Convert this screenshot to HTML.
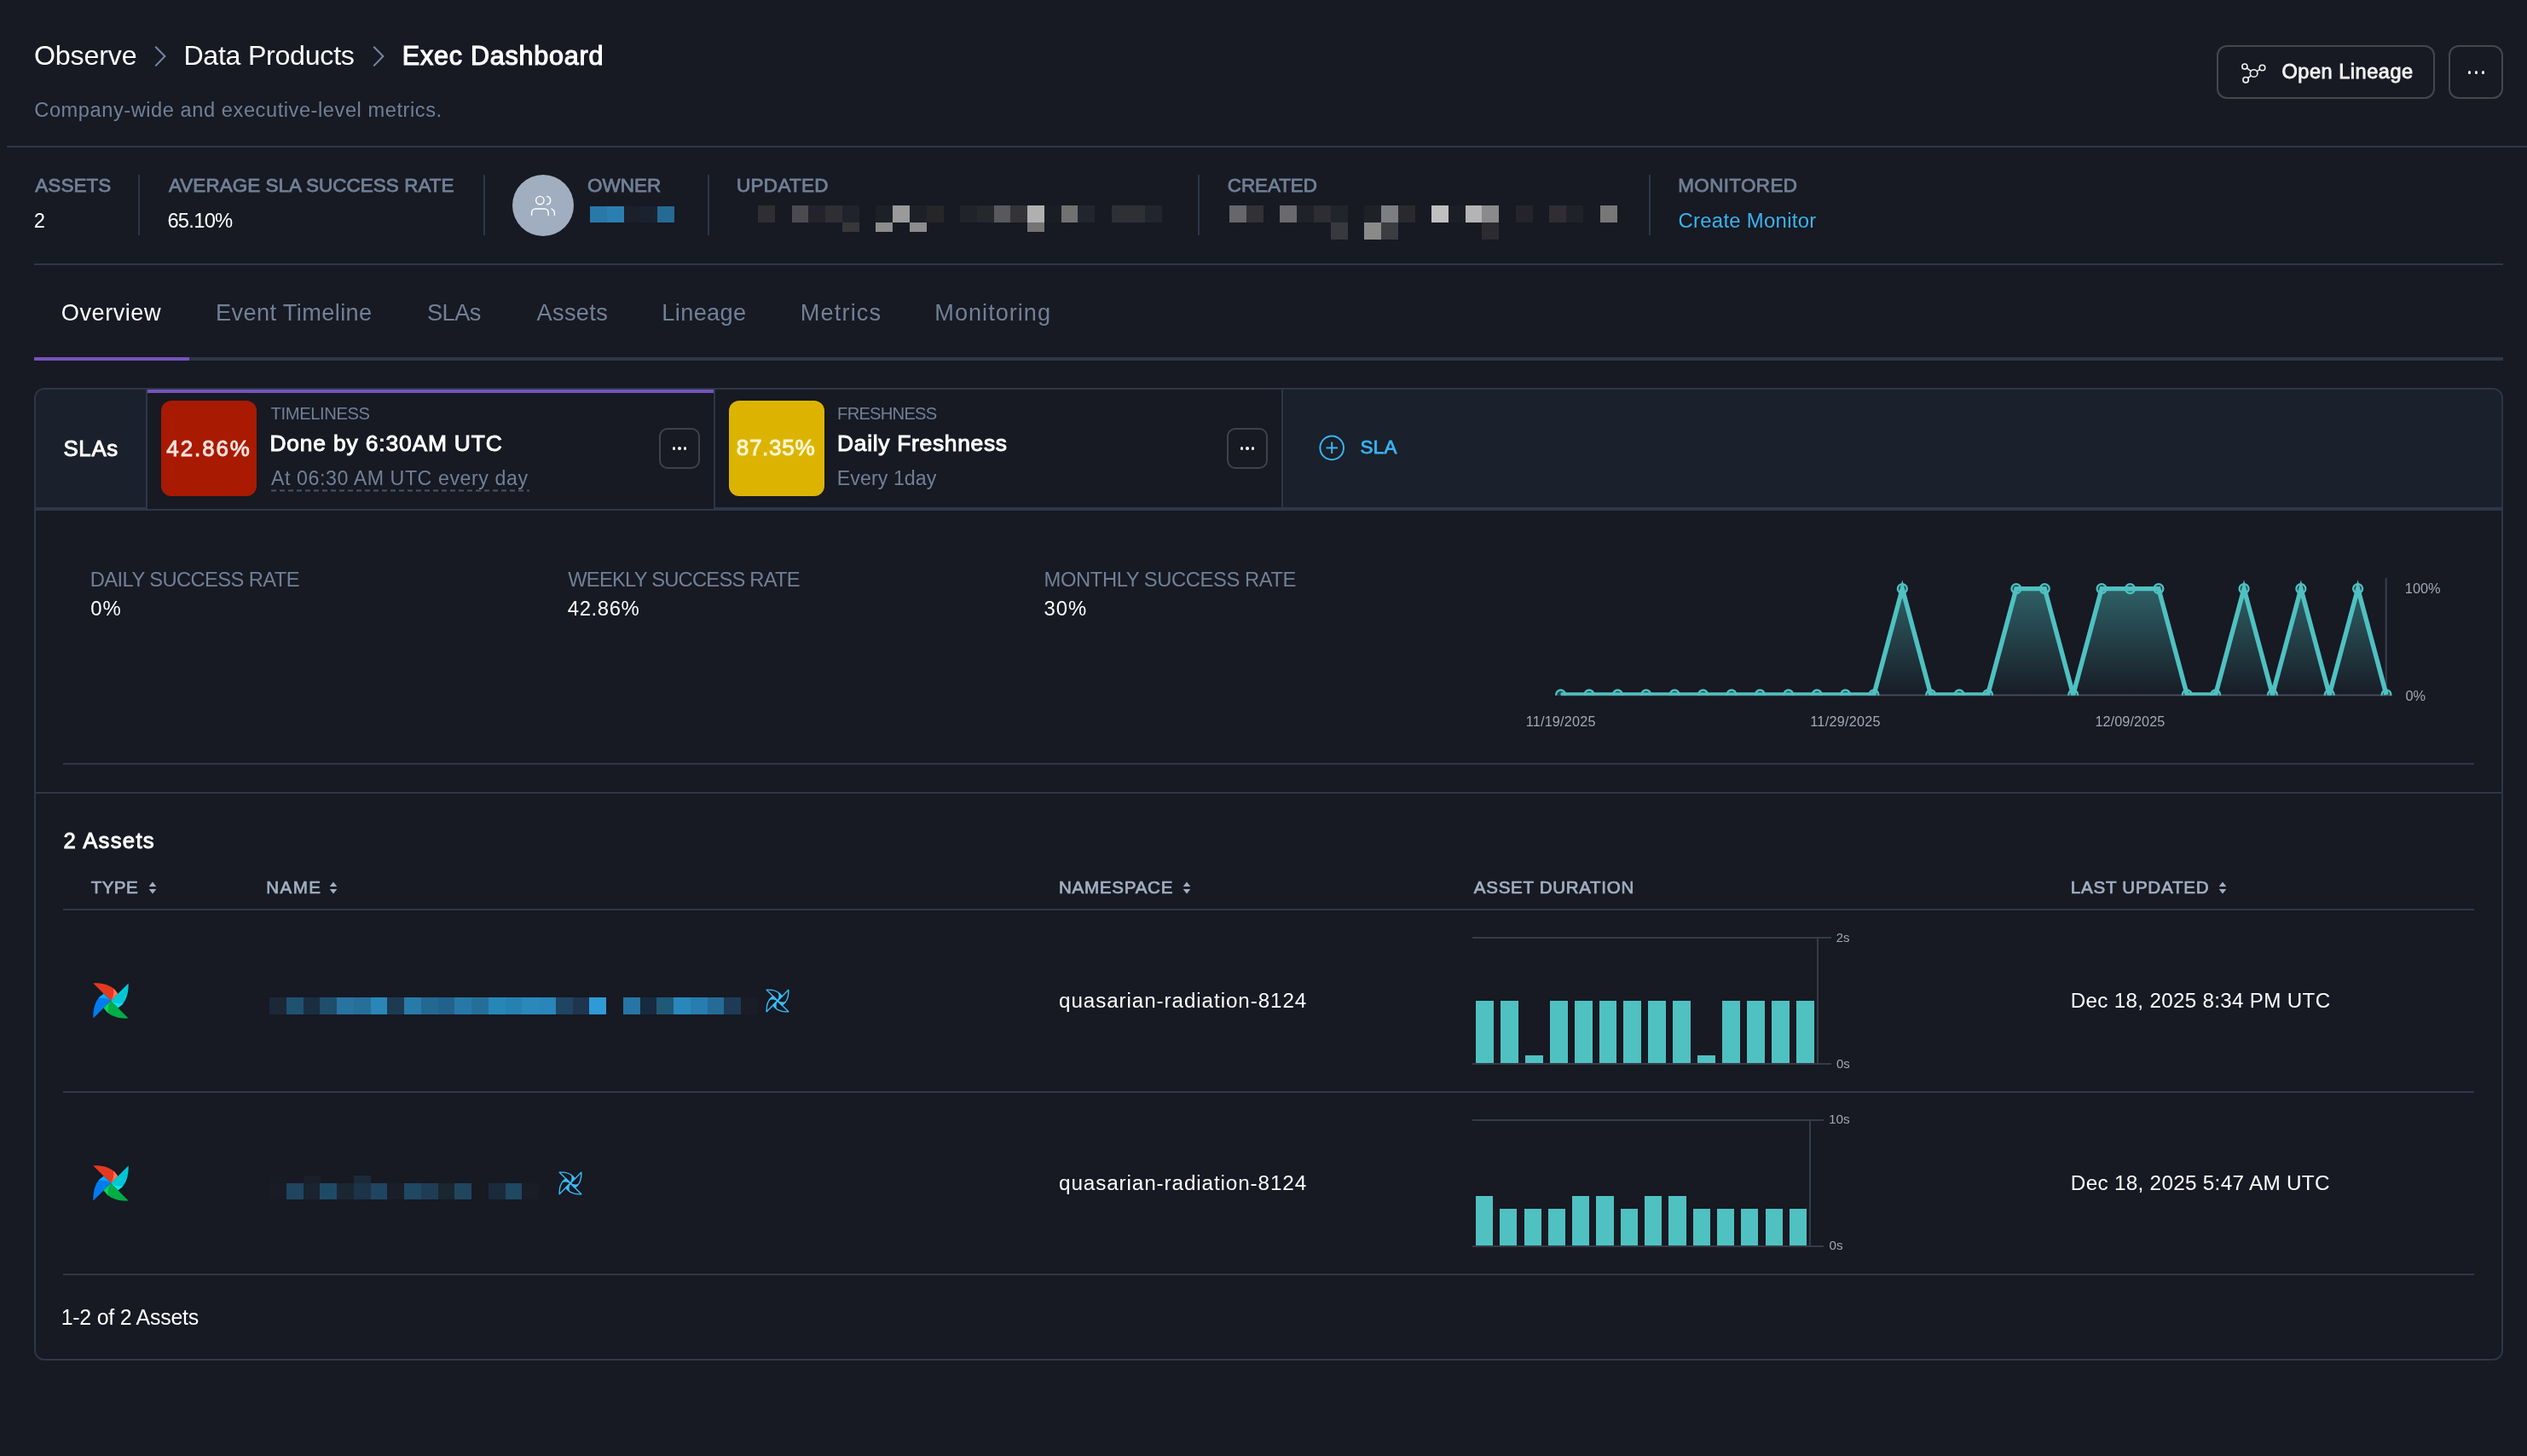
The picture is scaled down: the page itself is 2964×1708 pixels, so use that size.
<!DOCTYPE html><html><head><meta charset="utf-8"><style>
html,body{margin:0;padding:0;background:#171923;width:2964px;height:1708px;overflow:hidden}
body{position:relative;font-family:"Liberation Sans",sans-serif}
.t{position:absolute;line-height:1;white-space:nowrap}
.r{position:absolute;box-sizing:border-box}
</style></head><body>
<div class="r" style="left:8px;top:171px;width:2956px;height:2px;background:#2d3748;"></div>
<svg class="r" style="left:170px;top:45px" width="300" height="45"><polyline points="12.8,10.2 23.4,21 12.8,31.9" fill="none" stroke="#7888a2" stroke-width="2" stroke-linecap="round"/><polyline points="268.8,10.2 279.4,21 268.8,31.9" fill="none" stroke="#7888a2" stroke-width="2" stroke-linecap="round"/></svg>
<div class="r" style="left:2600px;top:53px;width:256px;height:63px;background:transparent;border:2px solid #45474f;border-radius:12px"></div>
<div class="r" style="left:2872px;top:53px;width:64px;height:63px;background:transparent;border:2px solid #45474f;border-radius:12px"></div>
<svg class="r" style="left:2626px;top:70px" width="36" height="32"><g fill="none" stroke="#f2f2f2" stroke-width="1.6"><circle cx="6.9" cy="8.1" r="3.05"/><circle cx="27.5" cy="9.5" r="3.3"/><circle cx="17.6" cy="16" r="4.3"/><circle cx="8.1" cy="23.7" r="3.2"/><line x1="9.36" y1="9.91" x2="14.14" y2="13.45"/><line x1="24.74" y1="11.31" x2="21.2" y2="13.64"/><line x1="10.59" y1="21.68" x2="14.26" y2="18.71"/></g></svg>
<div class="r" style="left:2894.7px;top:83.2px;width:3.6px;height:3.6px;background:#f2f2f2;border-radius:50%"></div>
<div class="r" style="left:2902.7px;top:83.2px;width:3.6px;height:3.6px;background:#f2f2f2;border-radius:50%"></div>
<div class="r" style="left:2910.7px;top:83.2px;width:3.6px;height:3.6px;background:#f2f2f2;border-radius:50%"></div>
<div class="r" style="left:162px;top:205px;width:2px;height:71px;background:#2d3748;"></div>
<div class="r" style="left:567px;top:205px;width:2px;height:71px;background:#2d3748;"></div>
<div class="r" style="left:830px;top:205px;width:2px;height:71px;background:#2d3748;"></div>
<div class="r" style="left:1405px;top:205px;width:2px;height:71px;background:#2d3748;"></div>
<div class="r" style="left:1934px;top:205px;width:2px;height:71px;background:#2d3748;"></div>
<div class="r" style="left:601px;top:205px;width:72px;height:72px;background:#a0aec0;border-radius:50%"></div>
<svg class="r" style="left:617px;top:222px" width="40" height="40"><g fill="none" stroke="#fff" stroke-width="1.45" stroke-linecap="round"><circle cx="16.35" cy="13.05" r="4.7"/><path d="M6.6 30.2 V27.6 C6.6 25 8.6 22.9 11.2 22.9 H21.7 C24.3 22.9 26.2 25 26.2 27.6 V30.2"/><path d="M24.5 8.4 A4.8 4.8 0 0 1 24.5 17.9"/><path d="M30 23.1 C32.1 24 33.4 25.8 33.4 28 V30.2"/></g></svg>
<div class="r" style="left:692.0px;top:242px;width:20.05px;height:19px;background:#2878a8;"></div><div class="r" style="left:711.75px;top:242px;width:20.05px;height:19px;background:#2a7fb0;"></div><div class="r" style="left:731.5px;top:242px;width:20.05px;height:19px;background:#1b202b;"></div><div class="r" style="left:751.25px;top:242px;width:20.05px;height:19px;background:#1a2230;"></div><div class="r" style="left:771.0px;top:242px;width:20.05px;height:19px;background:#246a92;"></div>
<div class="r" style="left:889.0px;top:241px;width:20.05px;height:20px;background:#2f2f33;"></div><div class="r" style="left:928.5px;top:241px;width:20.05px;height:20px;background:#4a4a50;"></div><div class="r" style="left:948.25px;top:241px;width:20.05px;height:20px;background:#24232b;"></div><div class="r" style="left:968.0px;top:241px;width:20.05px;height:20px;background:#302e35;"></div><div class="r" style="left:987.75px;top:241px;width:20.05px;height:20px;background:#20232b;"></div><div class="r" style="left:1027.25px;top:241px;width:20.05px;height:20px;background:#1e2028;"></div><div class="r" style="left:1047.0px;top:241px;width:20.05px;height:20px;background:#9a9a9a;"></div><div class="r" style="left:1066.75px;top:241px;width:20.05px;height:20px;background:#1e2028;"></div><div class="r" style="left:1086.5px;top:241px;width:20.05px;height:20px;background:#262629;"></div><div class="r" style="left:1126.0px;top:241px;width:20.05px;height:20px;background:#202329;"></div><div class="r" style="left:1145.75px;top:241px;width:20.05px;height:20px;background:#25282d;"></div><div class="r" style="left:1165.5px;top:241px;width:20.05px;height:20px;background:#59585d;"></div><div class="r" style="left:1185.25px;top:241px;width:20.05px;height:20px;background:#333338;"></div><div class="r" style="left:1205.0px;top:241px;width:20.05px;height:20px;background:#b0b0b0;"></div><div class="r" style="left:1224.75px;top:241px;width:20.05px;height:20px;background:#1b1d24;"></div><div class="r" style="left:1244.5px;top:241px;width:20.05px;height:20px;background:#717171;"></div><div class="r" style="left:1264.25px;top:241px;width:20.05px;height:20px;background:#22252e;"></div><div class="r" style="left:1303.75px;top:241px;width:20.05px;height:20px;background:#2f3036;"></div><div class="r" style="left:1323.5px;top:241px;width:20.05px;height:20px;background:#2f3036;"></div><div class="r" style="left:1343.25px;top:241px;width:20.05px;height:20px;background:#22252e;"></div>
<div class="r" style="left:987.75px;top:261px;width:20.05px;height:11px;background:#38383b;"></div><div class="r" style="left:1027.25px;top:261px;width:20.05px;height:11px;background:#8c8c8c;"></div><div class="r" style="left:1066.75px;top:261px;width:20.05px;height:11px;background:#8c8c8c;"></div><div class="r" style="left:1205.0px;top:261px;width:20.05px;height:11px;background:#747474;"></div>
<div class="r" style="left:1442.0px;top:241px;width:20.05px;height:20px;background:#67666b;"></div><div class="r" style="left:1461.75px;top:241px;width:20.05px;height:20px;background:#313136;"></div><div class="r" style="left:1501.25px;top:241px;width:20.05px;height:20px;background:#6a696e;"></div><div class="r" style="left:1521.0px;top:241px;width:20.05px;height:20px;background:#202229;"></div><div class="r" style="left:1540.75px;top:241px;width:20.05px;height:20px;background:#2d2d32;"></div><div class="r" style="left:1560.5px;top:241px;width:20.05px;height:20px;background:#22242c;"></div><div class="r" style="left:1600.0px;top:241px;width:20.05px;height:20px;background:#1f2129;"></div><div class="r" style="left:1619.75px;top:241px;width:20.05px;height:20px;background:#7d7e81;"></div><div class="r" style="left:1639.5px;top:241px;width:20.05px;height:20px;background:#2a2a2e;"></div><div class="r" style="left:1679.0px;top:241px;width:20.05px;height:20px;background:#c0c0c0;"></div><div class="r" style="left:1698.75px;top:241px;width:20.05px;height:20px;background:#1c1e25;"></div><div class="r" style="left:1718.5px;top:241px;width:20.05px;height:20px;background:#b4b4b4;"></div><div class="r" style="left:1738.25px;top:241px;width:20.05px;height:20px;background:#8a8a8a;"></div><div class="r" style="left:1777.75px;top:241px;width:20.05px;height:20px;background:#25242c;"></div><div class="r" style="left:1817.25px;top:241px;width:20.05px;height:20px;background:#302e33;"></div><div class="r" style="left:1837.0px;top:241px;width:20.05px;height:20px;background:#20222a;"></div><div class="r" style="left:1876.5px;top:241px;width:20.05px;height:20px;background:#777777;"></div>
<div class="r" style="left:1560.5px;top:261px;width:20.05px;height:20px;background:#38393e;"></div><div class="r" style="left:1600.0px;top:261px;width:20.05px;height:20px;background:#8a8a8a;"></div><div class="r" style="left:1619.75px;top:261px;width:20.05px;height:20px;background:#3c3d41;"></div><div class="r" style="left:1738.25px;top:261px;width:20.05px;height:20px;background:#2c2b30;"></div>
<div class="r" style="left:40px;top:309px;width:2896px;height:2px;background:#2d3748;"></div>
<div class="r" style="left:40px;top:419px;width:2896px;height:4px;background:#2d3748;"></div>
<div class="r" style="left:40px;top:419px;width:182px;height:4px;background:#7654ba;"></div>
<div class="r" style="left:40px;top:455px;width:2896px;height:1141px;background:transparent;border:2px solid #2d3748;border-radius:12px"></div>
<div class="r" style="left:42px;top:457px;width:130px;height:138px;background:#1a202c;border-top-left-radius:10px"></div>
<div class="r" style="left:171px;top:457px;width:2px;height:138px;background:#2d3748;"></div>
<div class="r" style="left:173px;top:457px;width:664px;height:4px;background:#7654ba;"></div>
<div class="r" style="left:837px;top:457px;width:2px;height:138px;background:#2d3748;"></div>
<div class="r" style="left:1503px;top:457px;width:2px;height:138px;background:#2d3748;"></div>
<div class="r" style="left:1505px;top:457px;width:1429px;height:138px;background:#1a202c;border-top-right-radius:10px"></div>
<div class="r" style="left:42px;top:595px;width:2892px;height:4px;background:#2d3748;"></div>
<div class="r" style="left:173px;top:595px;width:664px;height:2px;background:#171923;"></div>
<div class="r" style="left:189px;top:470px;width:112px;height:112px;background:#a81a02;border-radius:12px"></div>
<div class="r" style="left:855px;top:470px;width:112px;height:112px;background:#dcb400;border-radius:12px"></div>
<svg class="r" style="left:318px;top:574px" width="304" height="3"><line x1="0" y1="1.5" x2="303" y2="1.5" stroke="#4a5568" stroke-width="2" stroke-dasharray="6 4"/></svg>
<div class="r" style="left:773px;top:502px;width:48px;height:48px;background:transparent;border:2px solid #3f4249;border-radius:10px"></div>
<div class="r" style="left:788.75px;top:524.2px;width:3.5px;height:3.5px;background:#f2f2f2;border-radius:50%"></div>
<div class="r" style="left:795.25px;top:524.2px;width:3.5px;height:3.5px;background:#f2f2f2;border-radius:50%"></div>
<div class="r" style="left:801.75px;top:524.2px;width:3.5px;height:3.5px;background:#f2f2f2;border-radius:50%"></div>
<div class="r" style="left:1439px;top:502px;width:48px;height:48px;background:transparent;border:2px solid #3f4249;border-radius:10px"></div>
<div class="r" style="left:1454.75px;top:524.2px;width:3.5px;height:3.5px;background:#f2f2f2;border-radius:50%"></div>
<div class="r" style="left:1461.25px;top:524.2px;width:3.5px;height:3.5px;background:#f2f2f2;border-radius:50%"></div>
<div class="r" style="left:1467.75px;top:524.2px;width:3.5px;height:3.5px;background:#f2f2f2;border-radius:50%"></div>
<svg class="r" style="left:1546px;top:509px" width="33" height="33"><g fill="none" stroke="#3ab4ef" stroke-width="2"><circle cx="16.2" cy="16.4" r="13.8"/><line x1="9.5" y1="16.4" x2="23" y2="16.4"/><line x1="16.2" y1="9.5" x2="16.2" y2="23"/></g></svg>
<svg class="r" style="left:1800px;top:660px" width="1110" height="180">
<defs><linearGradient id="lg" x1="0" y1="0" x2="0" y2="1"><stop offset="0" stop-color="#4fc1c1" stop-opacity="0.42"/><stop offset="1" stop-color="#4fc1c1" stop-opacity="0.02"/></linearGradient>
<clipPath id="cp"><rect x="0" y="0" width="1110" height="155.8"/></clipPath></defs>
<line x1="30.59999999999991" y1="155.5" x2="1005" y2="155.5" stroke="#434a5a" stroke-width="2"/><line x1="998.6999999999998" y1="18" x2="998.6999999999998" y2="155.0" stroke="#3a4150" stroke-width="2"/>
<g clip-path="url(#cp)"><path d="M30.60 155.00 L63.99 155.00 L97.39 155.00 L130.78 155.00 L164.18 155.00 L197.57 155.00 L230.96 155.00 L264.36 155.00 L297.75 155.00 L331.15 155.00 L364.54 155.00 L397.93 155.00 L431.33 30.60 L464.72 155.00 L498.12 155.00 L531.51 155.00 L564.90 30.60 L598.30 30.60 L631.69 155.00 L665.09 30.60 L698.48 30.60 L731.87 30.60 L765.27 155.00 L798.66 155.00 L832.06 30.60 L865.45 155.00 L898.84 30.60 L932.24 155.00 L965.63 30.60 L999.03 155.00 L999.03 155.0 L30.60 155.0 Z" fill="url(#lg)" transform="translate(0,0)"/>
<circle cx="30.60" cy="155.00" r="5.5" fill="#4fc1c1" fill-opacity="0.25" stroke="#4fc1c1" stroke-width="2.3"/><circle cx="63.99" cy="155.00" r="5.5" fill="#4fc1c1" fill-opacity="0.25" stroke="#4fc1c1" stroke-width="2.3"/><circle cx="97.39" cy="155.00" r="5.5" fill="#4fc1c1" fill-opacity="0.25" stroke="#4fc1c1" stroke-width="2.3"/><circle cx="130.78" cy="155.00" r="5.5" fill="#4fc1c1" fill-opacity="0.25" stroke="#4fc1c1" stroke-width="2.3"/><circle cx="164.18" cy="155.00" r="5.5" fill="#4fc1c1" fill-opacity="0.25" stroke="#4fc1c1" stroke-width="2.3"/><circle cx="197.57" cy="155.00" r="5.5" fill="#4fc1c1" fill-opacity="0.25" stroke="#4fc1c1" stroke-width="2.3"/><circle cx="230.96" cy="155.00" r="5.5" fill="#4fc1c1" fill-opacity="0.25" stroke="#4fc1c1" stroke-width="2.3"/><circle cx="264.36" cy="155.00" r="5.5" fill="#4fc1c1" fill-opacity="0.25" stroke="#4fc1c1" stroke-width="2.3"/><circle cx="297.75" cy="155.00" r="5.5" fill="#4fc1c1" fill-opacity="0.25" stroke="#4fc1c1" stroke-width="2.3"/><circle cx="331.15" cy="155.00" r="5.5" fill="#4fc1c1" fill-opacity="0.25" stroke="#4fc1c1" stroke-width="2.3"/><circle cx="364.54" cy="155.00" r="5.5" fill="#4fc1c1" fill-opacity="0.25" stroke="#4fc1c1" stroke-width="2.3"/><circle cx="397.93" cy="155.00" r="5.5" fill="#4fc1c1" fill-opacity="0.25" stroke="#4fc1c1" stroke-width="2.3"/><circle cx="431.33" cy="30.60" r="5.5" fill="#4fc1c1" fill-opacity="0.25" stroke="#4fc1c1" stroke-width="2.3"/><circle cx="464.72" cy="155.00" r="5.5" fill="#4fc1c1" fill-opacity="0.25" stroke="#4fc1c1" stroke-width="2.3"/><circle cx="498.12" cy="155.00" r="5.5" fill="#4fc1c1" fill-opacity="0.25" stroke="#4fc1c1" stroke-width="2.3"/><circle cx="531.51" cy="155.00" r="5.5" fill="#4fc1c1" fill-opacity="0.25" stroke="#4fc1c1" stroke-width="2.3"/><circle cx="564.90" cy="30.60" r="5.5" fill="#4fc1c1" fill-opacity="0.25" stroke="#4fc1c1" stroke-width="2.3"/><circle cx="598.30" cy="30.60" r="5.5" fill="#4fc1c1" fill-opacity="0.25" stroke="#4fc1c1" stroke-width="2.3"/><circle cx="631.69" cy="155.00" r="5.5" fill="#4fc1c1" fill-opacity="0.25" stroke="#4fc1c1" stroke-width="2.3"/><circle cx="665.09" cy="30.60" r="5.5" fill="#4fc1c1" fill-opacity="0.25" stroke="#4fc1c1" stroke-width="2.3"/><circle cx="698.48" cy="30.60" r="5.5" fill="#4fc1c1" fill-opacity="0.25" stroke="#4fc1c1" stroke-width="2.3"/><circle cx="731.87" cy="30.60" r="5.5" fill="#4fc1c1" fill-opacity="0.25" stroke="#4fc1c1" stroke-width="2.3"/><circle cx="765.27" cy="155.00" r="5.5" fill="#4fc1c1" fill-opacity="0.25" stroke="#4fc1c1" stroke-width="2.3"/><circle cx="798.66" cy="155.00" r="5.5" fill="#4fc1c1" fill-opacity="0.25" stroke="#4fc1c1" stroke-width="2.3"/><circle cx="832.06" cy="30.60" r="5.5" fill="#4fc1c1" fill-opacity="0.25" stroke="#4fc1c1" stroke-width="2.3"/><circle cx="865.45" cy="155.00" r="5.5" fill="#4fc1c1" fill-opacity="0.25" stroke="#4fc1c1" stroke-width="2.3"/><circle cx="898.84" cy="30.60" r="5.5" fill="#4fc1c1" fill-opacity="0.25" stroke="#4fc1c1" stroke-width="2.3"/><circle cx="932.24" cy="155.00" r="5.5" fill="#4fc1c1" fill-opacity="0.25" stroke="#4fc1c1" stroke-width="2.3"/><circle cx="965.63" cy="30.60" r="5.5" fill="#4fc1c1" fill-opacity="0.25" stroke="#4fc1c1" stroke-width="2.3"/><circle cx="999.03" cy="155.00" r="5.5" fill="#4fc1c1" fill-opacity="0.25" stroke="#4fc1c1" stroke-width="2.3"/>
<path d="M30.60 155.00 L63.99 155.00 L97.39 155.00 L130.78 155.00 L164.18 155.00 L197.57 155.00 L230.96 155.00 L264.36 155.00 L297.75 155.00 L331.15 155.00 L364.54 155.00 L397.93 155.00 L431.33 30.60 L464.72 155.00 L498.12 155.00 L531.51 155.00 L564.90 30.60 L598.30 30.60 L631.69 155.00 L665.09 30.60 L698.48 30.60 L731.87 30.60 L765.27 155.00 L798.66 155.00 L832.06 30.60 L865.45 155.00 L898.84 30.60 L932.24 155.00 L965.63 30.60 L999.03 155.00" fill="none" stroke="#4fc1c1" stroke-width="5.4" stroke-linejoin="miter" stroke-miterlimit="4"/></g></svg>
<div class="r" style="left:74px;top:895px;width:2828px;height:2px;background:#2d3748;"></div>
<div class="r" style="left:42px;top:929px;width:2892px;height:2px;background:#2d3748;"></div>
<svg class="r" style="left:173.5px;top:1034px" width="10" height="15"><path d="M5 0.5 L9.3 6 L0.7 6 Z M0.7 9 L9.3 9 L5 14.5 Z" fill="#a0aec0"/></svg>
<svg class="r" style="left:386.3px;top:1034px" width="10" height="15"><path d="M5 0.5 L9.3 6 L0.7 6 Z M0.7 9 L9.3 9 L5 14.5 Z" fill="#a0aec0"/></svg>
<svg class="r" style="left:1387px;top:1034px" width="10" height="15"><path d="M5 0.5 L9.3 6 L0.7 6 Z M0.7 9 L9.3 9 L5 14.5 Z" fill="#a0aec0"/></svg>
<svg class="r" style="left:2602.4px;top:1034px" width="10" height="15"><path d="M5 0.5 L9.3 6 L0.7 6 Z M0.7 9 L9.3 9 L5 14.5 Z" fill="#a0aec0"/></svg>
<div class="r" style="left:74px;top:1066px;width:2828px;height:2px;background:#2d3748;"></div>
<div class="r" style="left:74px;top:1280px;width:2828px;height:2px;background:#2d3748;"></div>
<div class="r" style="left:74px;top:1494px;width:2828px;height:2px;background:#2d3748;"></div>
<svg class="r" style="left:109px;top:1153px" width="42" height="42" viewBox="4.6 4.6 42.8 42.8"><g transform="rotate(0 26 26)"><path d="M5 5 C15 4.5 25 7 30.5 12.5 L34.5 17.5 L26 26 Z" fill="#e43921"/><path d="M29 11.2 C30 15 29.5 21 26 26 L34.5 17.5 L30.5 12.5 Z" fill="#ff7557"/></g><g transform="rotate(90 26 26)"><path d="M5 5 C15 4.5 25 7 30.5 12.5 L34.5 17.5 L26 26 Z" fill="#00c7d4"/><path d="M29 11.2 C30 15 29.5 21 26 26 L34.5 17.5 L30.5 12.5 Z" fill="#11e1ee"/></g><g transform="rotate(180 26 26)"><path d="M5 5 C15 4.5 25 7 30.5 12.5 L34.5 17.5 L26 26 Z" fill="#00ad46"/><path d="M29 11.2 C30 15 29.5 21 26 26 L34.5 17.5 L30.5 12.5 Z" fill="#04d659"/></g><g transform="rotate(270 26 26)"><path d="M5 5 C15 4.5 25 7 30.5 12.5 L34.5 17.5 L26 26 Z" fill="#017cee"/><path d="M29 11.2 C30 15 29.5 21 26 26 L34.5 17.5 L30.5 12.5 Z" fill="#00adff"/></g></svg>
<svg class="r" style="left:109px;top:1367px" width="42" height="42" viewBox="4.6 4.6 42.8 42.8"><g transform="rotate(0 26 26)"><path d="M5 5 C15 4.5 25 7 30.5 12.5 L34.5 17.5 L26 26 Z" fill="#e43921"/><path d="M29 11.2 C30 15 29.5 21 26 26 L34.5 17.5 L30.5 12.5 Z" fill="#ff7557"/></g><g transform="rotate(90 26 26)"><path d="M5 5 C15 4.5 25 7 30.5 12.5 L34.5 17.5 L26 26 Z" fill="#00c7d4"/><path d="M29 11.2 C30 15 29.5 21 26 26 L34.5 17.5 L30.5 12.5 Z" fill="#11e1ee"/></g><g transform="rotate(180 26 26)"><path d="M5 5 C15 4.5 25 7 30.5 12.5 L34.5 17.5 L26 26 Z" fill="#00ad46"/><path d="M29 11.2 C30 15 29.5 21 26 26 L34.5 17.5 L30.5 12.5 Z" fill="#04d659"/></g><g transform="rotate(270 26 26)"><path d="M5 5 C15 4.5 25 7 30.5 12.5 L34.5 17.5 L26 26 Z" fill="#017cee"/><path d="M29 11.2 C30 15 29.5 21 26 26 L34.5 17.5 L30.5 12.5 Z" fill="#00adff"/></g></svg>
<div class="r" style="left:316.0px;top:1170px;width:20.05px;height:20px;background:#1b2838;"></div><div class="r" style="left:335.75px;top:1170px;width:20.05px;height:20px;background:#1f5170;"></div><div class="r" style="left:355.5px;top:1170px;width:20.05px;height:20px;background:#1a2e40;"></div><div class="r" style="left:375.25px;top:1170px;width:20.05px;height:20px;background:#1f4d6c;"></div><div class="r" style="left:395.0px;top:1170px;width:20.05px;height:20px;background:#2873a0;"></div><div class="r" style="left:414.75px;top:1170px;width:20.05px;height:20px;background:#256f99;"></div><div class="r" style="left:434.5px;top:1170px;width:20.05px;height:20px;background:#2987b8;"></div><div class="r" style="left:454.25px;top:1170px;width:20.05px;height:20px;background:#1e3a52;"></div><div class="r" style="left:474.0px;top:1170px;width:20.05px;height:20px;background:#287ba8;"></div><div class="r" style="left:493.75px;top:1170px;width:20.05px;height:20px;background:#236890;"></div><div class="r" style="left:513.5px;top:1170px;width:20.05px;height:20px;background:#22618a;"></div><div class="r" style="left:533.25px;top:1170px;width:20.05px;height:20px;background:#2778a8;"></div><div class="r" style="left:553.0px;top:1170px;width:20.05px;height:20px;background:#256e98;"></div><div class="r" style="left:572.75px;top:1170px;width:20.05px;height:20px;background:#2786b8;"></div><div class="r" style="left:592.5px;top:1170px;width:20.05px;height:20px;background:#2680b2;"></div><div class="r" style="left:612.25px;top:1170px;width:20.05px;height:20px;background:#2a88bb;"></div><div class="r" style="left:632.0px;top:1170px;width:20.05px;height:20px;background:#2886bb;"></div><div class="r" style="left:651.75px;top:1170px;width:20.05px;height:20px;background:#1e4562;"></div><div class="r" style="left:671.5px;top:1170px;width:20.05px;height:20px;background:#1d364e;"></div><div class="r" style="left:691.25px;top:1170px;width:20.05px;height:20px;background:#2e9bd6;"></div><div class="r" style="left:730.75px;top:1170px;width:20.05px;height:20px;background:#2775a5;"></div><div class="r" style="left:750.5px;top:1170px;width:20.05px;height:20px;background:#182a40;"></div><div class="r" style="left:770.25px;top:1170px;width:20.05px;height:20px;background:#205878;"></div><div class="r" style="left:790.0px;top:1170px;width:20.05px;height:20px;background:#2888bb;"></div><div class="r" style="left:809.75px;top:1170px;width:20.05px;height:20px;background:#277daf;"></div><div class="r" style="left:829.5px;top:1170px;width:20.05px;height:20px;background:#246c96;"></div><div class="r" style="left:849.25px;top:1170px;width:20.05px;height:20px;background:#1e3b55;"></div><div class="r" style="left:869.0px;top:1170px;width:20.05px;height:20px;background:#1a1d27;"></div>
<div class="r" style="left:316.0px;top:1388px;width:20.05px;height:19px;background:#181c26;"></div><div class="r" style="left:335.75px;top:1388px;width:20.05px;height:19px;background:#1f4560;"></div><div class="r" style="left:355.5px;top:1388px;width:20.05px;height:19px;background:#1a2330;"></div><div class="r" style="left:375.25px;top:1388px;width:20.05px;height:19px;background:#1f4a66;"></div><div class="r" style="left:395.0px;top:1388px;width:20.05px;height:19px;background:#1b2633;"></div><div class="r" style="left:414.75px;top:1388px;width:20.05px;height:19px;background:#1d3348;"></div><div class="r" style="left:434.5px;top:1388px;width:20.05px;height:19px;background:#1f4560;"></div><div class="r" style="left:454.25px;top:1388px;width:20.05px;height:19px;background:#1a1e28;"></div><div class="r" style="left:474.0px;top:1388px;width:20.05px;height:19px;background:#1f4862;"></div><div class="r" style="left:493.75px;top:1388px;width:20.05px;height:19px;background:#1f3c55;"></div><div class="r" style="left:513.5px;top:1388px;width:20.05px;height:19px;background:#1a2630;"></div><div class="r" style="left:533.25px;top:1388px;width:20.05px;height:19px;background:#20465f;"></div><div class="r" style="left:572.75px;top:1388px;width:20.05px;height:19px;background:#1b2a3a;"></div><div class="r" style="left:592.5px;top:1388px;width:20.05px;height:19px;background:#1f4862;"></div><div class="r" style="left:612.25px;top:1388px;width:20.05px;height:19px;background:#1a1d27;"></div>
<div class="r" style="left:316.0px;top:1379px;width:20.05px;height:9px;background:#181b23;"></div><div class="r" style="left:355.5px;top:1379px;width:20.05px;height:9px;background:#1a1f2a;"></div><div class="r" style="left:414.75px;top:1379px;width:20.05px;height:9px;background:#1b2a3a;"></div>
<svg class="r" style="left:897.5px;top:1159.5px" width="28" height="28" viewBox="3 3 46 46"><g transform="rotate(0 26 26)"><path d="M5 5 C15 4.5 25 7 30.5 12.5 L34.5 17.5 L26 26 Z" fill="none" stroke="#38bdf8" stroke-width="2.3" stroke-linejoin="round"/><path d="M28.2 10.8 C30 15 29.5 21 26 26 L34.5 17.5 L30.5 12.5 Z" fill="#38bdf8" stroke="#38bdf8" stroke-width="1.5" stroke-linejoin="round"/></g><g transform="rotate(90 26 26)"><path d="M5 5 C15 4.5 25 7 30.5 12.5 L34.5 17.5 L26 26 Z" fill="none" stroke="#38bdf8" stroke-width="2.3" stroke-linejoin="round"/><path d="M28.2 10.8 C30 15 29.5 21 26 26 L34.5 17.5 L30.5 12.5 Z" fill="#38bdf8" stroke="#38bdf8" stroke-width="1.5" stroke-linejoin="round"/></g><g transform="rotate(180 26 26)"><path d="M5 5 C15 4.5 25 7 30.5 12.5 L34.5 17.5 L26 26 Z" fill="none" stroke="#38bdf8" stroke-width="2.3" stroke-linejoin="round"/><path d="M28.2 10.8 C30 15 29.5 21 26 26 L34.5 17.5 L30.5 12.5 Z" fill="#38bdf8" stroke="#38bdf8" stroke-width="1.5" stroke-linejoin="round"/></g><g transform="rotate(270 26 26)"><path d="M5 5 C15 4.5 25 7 30.5 12.5 L34.5 17.5 L26 26 Z" fill="none" stroke="#38bdf8" stroke-width="2.3" stroke-linejoin="round"/><path d="M28.2 10.8 C30 15 29.5 21 26 26 L34.5 17.5 L30.5 12.5 Z" fill="#38bdf8" stroke="#38bdf8" stroke-width="1.5" stroke-linejoin="round"/></g></svg>
<svg class="r" style="left:655.4px;top:1373.5px" width="28" height="28" viewBox="3 3 46 46"><g transform="rotate(0 26 26)"><path d="M5 5 C15 4.5 25 7 30.5 12.5 L34.5 17.5 L26 26 Z" fill="none" stroke="#38bdf8" stroke-width="2.3" stroke-linejoin="round"/><path d="M28.2 10.8 C30 15 29.5 21 26 26 L34.5 17.5 L30.5 12.5 Z" fill="#38bdf8" stroke="#38bdf8" stroke-width="1.5" stroke-linejoin="round"/></g><g transform="rotate(90 26 26)"><path d="M5 5 C15 4.5 25 7 30.5 12.5 L34.5 17.5 L26 26 Z" fill="none" stroke="#38bdf8" stroke-width="2.3" stroke-linejoin="round"/><path d="M28.2 10.8 C30 15 29.5 21 26 26 L34.5 17.5 L30.5 12.5 Z" fill="#38bdf8" stroke="#38bdf8" stroke-width="1.5" stroke-linejoin="round"/></g><g transform="rotate(180 26 26)"><path d="M5 5 C15 4.5 25 7 30.5 12.5 L34.5 17.5 L26 26 Z" fill="none" stroke="#38bdf8" stroke-width="2.3" stroke-linejoin="round"/><path d="M28.2 10.8 C30 15 29.5 21 26 26 L34.5 17.5 L30.5 12.5 Z" fill="#38bdf8" stroke="#38bdf8" stroke-width="1.5" stroke-linejoin="round"/></g><g transform="rotate(270 26 26)"><path d="M5 5 C15 4.5 25 7 30.5 12.5 L34.5 17.5 L26 26 Z" fill="none" stroke="#38bdf8" stroke-width="2.3" stroke-linejoin="round"/><path d="M28.2 10.8 C30 15 29.5 21 26 26 L34.5 17.5 L30.5 12.5 Z" fill="#38bdf8" stroke="#38bdf8" stroke-width="1.5" stroke-linejoin="round"/></g></svg>
<div class="r" style="left:1727px;top:1099px;width:421px;height:2px;background:#353c4a;"></div><div class="r" style="left:1727px;top:1247px;width:421px;height:2px;background:#353c4a;"></div><div class="r" style="left:2131px;top:1100px;width:2px;height:148px;background:#353c4a;"></div><div class="r" style="left:1730.9px;top:1174px;width:20.9px;height:73px;background:#4fc1c1;"></div><div class="r" style="left:1759.83px;top:1174px;width:20.9px;height:73px;background:#4fc1c1;"></div><div class="r" style="left:1788.76px;top:1238px;width:20.9px;height:9px;background:#4fc1c1;"></div><div class="r" style="left:1817.69px;top:1174px;width:20.9px;height:73px;background:#4fc1c1;"></div><div class="r" style="left:1846.62px;top:1174px;width:20.9px;height:73px;background:#4fc1c1;"></div><div class="r" style="left:1875.55px;top:1174px;width:20.9px;height:73px;background:#4fc1c1;"></div><div class="r" style="left:1904.48px;top:1174px;width:20.9px;height:73px;background:#4fc1c1;"></div><div class="r" style="left:1933.41px;top:1174px;width:20.9px;height:73px;background:#4fc1c1;"></div><div class="r" style="left:1962.34px;top:1174px;width:20.9px;height:73px;background:#4fc1c1;"></div><div class="r" style="left:1991.27px;top:1238px;width:20.9px;height:9px;background:#4fc1c1;"></div><div class="r" style="left:2020.2px;top:1174px;width:20.9px;height:73px;background:#4fc1c1;"></div><div class="r" style="left:2049.13px;top:1174px;width:20.9px;height:73px;background:#4fc1c1;"></div><div class="r" style="left:2078.06px;top:1174px;width:20.9px;height:73px;background:#4fc1c1;"></div><div class="r" style="left:2106.99px;top:1174px;width:20.9px;height:73px;background:#4fc1c1;"></div>
<div class="r" style="left:1727px;top:1313px;width:412px;height:2px;background:#353c4a;"></div><div class="r" style="left:1727px;top:1461px;width:412px;height:2px;background:#353c4a;"></div><div class="r" style="left:2122px;top:1314px;width:2px;height:148px;background:#353c4a;"></div><div class="r" style="left:1730.9px;top:1403px;width:20.3px;height:58px;background:#4fc1c1;"></div><div class="r" style="left:1759.2px;top:1417.6px;width:20.3px;height:43.4px;background:#4fc1c1;"></div><div class="r" style="left:1787.5px;top:1417.6px;width:20.3px;height:43.4px;background:#4fc1c1;"></div><div class="r" style="left:1815.8px;top:1417.6px;width:20.3px;height:43.4px;background:#4fc1c1;"></div><div class="r" style="left:1844.1px;top:1403px;width:20.3px;height:58px;background:#4fc1c1;"></div><div class="r" style="left:1872.4px;top:1403px;width:20.3px;height:58px;background:#4fc1c1;"></div><div class="r" style="left:1900.7px;top:1417.6px;width:20.3px;height:43.4px;background:#4fc1c1;"></div><div class="r" style="left:1929.0px;top:1403px;width:20.3px;height:58px;background:#4fc1c1;"></div><div class="r" style="left:1957.3px;top:1403px;width:20.3px;height:58px;background:#4fc1c1;"></div><div class="r" style="left:1985.6px;top:1417.6px;width:20.3px;height:43.4px;background:#4fc1c1;"></div><div class="r" style="left:2013.9px;top:1417.6px;width:20.3px;height:43.4px;background:#4fc1c1;"></div><div class="r" style="left:2042.2px;top:1417.6px;width:20.3px;height:43.4px;background:#4fc1c1;"></div><div class="r" style="left:2070.5px;top:1417.6px;width:20.3px;height:43.4px;background:#4fc1c1;"></div><div class="r" style="left:2098.8px;top:1417.6px;width:20.3px;height:43.4px;background:#4fc1c1;"></div>
<div style="position:absolute;left:0;top:0;width:2964px;height:1708px;will-change:transform">
<div class="t" style="left:39.89px;top:48.89px;font-size:32.14px;font-weight:400;color:#ffffff;letter-spacing:-0.127px">Observe</div>
<div class="t" style="left:215.39px;top:48.89px;font-size:32.14px;font-weight:400;color:#ffffff;letter-spacing:-0.254px">Data Products</div>
<div class="t" style="left:471.76px;top:49.66px;font-size:30.58px;font-weight:400;color:#ffffff;letter-spacing:0.743px;-webkit-text-stroke:1.10px #ffffff">Exec Dashboard</div>
<div class="t" style="left:40.30px;top:117.81px;font-size:23.61px;font-weight:400;color:#718096;letter-spacing:0.562px">Company-wide and executive-level metrics.</div>
<div class="t" style="left:2676.52px;top:73.04px;font-size:23.54px;font-weight:400;color:#f2f2f2;letter-spacing:0.521px;-webkit-text-stroke:0.85px #f2f2f2">Open Lineage</div>
<div class="t" style="left:41.30px;top:206.58px;font-size:22.46px;font-weight:400;color:#718096;letter-spacing:0.071px;-webkit-text-stroke:0.81px #718096">ASSETS</div>
<div class="t" style="left:39.80px;top:246.79px;font-size:23.75px;font-weight:400;color:#ffffff;letter-spacing:0.000px">2</div>
<div class="t" style="left:198.00px;top:206.58px;font-size:22.46px;font-weight:400;color:#718096;letter-spacing:0.039px;-webkit-text-stroke:0.81px #718096">AVERAGE SLA SUCCESS RATE</div>
<div class="t" style="left:196.40px;top:246.79px;font-size:23.75px;font-weight:400;color:#ffffff;letter-spacing:-0.747px">65.10%</div>
<div class="t" style="left:688.90px;top:206.58px;font-size:22.46px;font-weight:400;color:#718096;letter-spacing:0.082px;-webkit-text-stroke:0.81px #718096">OWNER</div>
<div class="t" style="left:864.00px;top:206.58px;font-size:22.46px;font-weight:400;color:#718096;letter-spacing:0.328px;-webkit-text-stroke:0.81px #718096">UPDATED</div>
<div class="t" style="left:1439.80px;top:206.58px;font-size:22.46px;font-weight:400;color:#718096;letter-spacing:-0.089px;-webkit-text-stroke:0.81px #718096">CREATED</div>
<div class="t" style="left:1968.30px;top:206.58px;font-size:22.46px;font-weight:400;color:#718096;letter-spacing:0.360px;-webkit-text-stroke:0.81px #718096">MONITORED</div>
<div class="t" style="left:1968.50px;top:246.57px;font-size:23.89px;font-weight:400;color:#3ab4ef;letter-spacing:0.295px">Create Monitor</div>
<div class="t" style="left:71.83px;top:353.10px;font-size:27.16px;font-weight:400;color:#ffffff;letter-spacing:0.505px">Overview</div>
<div class="t" style="left:253.08px;top:353.10px;font-size:27.16px;font-weight:400;color:#718096;letter-spacing:0.383px">Event Timeline</div>
<div class="t" style="left:500.95px;top:353.10px;font-size:27.16px;font-weight:400;color:#718096;letter-spacing:-0.476px">SLAs</div>
<div class="t" style="left:629.60px;top:353.10px;font-size:27.16px;font-weight:400;color:#718096;letter-spacing:0.326px">Assets</div>
<div class="t" style="left:776.28px;top:353.10px;font-size:27.16px;font-weight:400;color:#718096;letter-spacing:0.374px">Lineage</div>
<div class="t" style="left:938.78px;top:353.10px;font-size:27.16px;font-weight:400;color:#718096;letter-spacing:1.141px">Metrics</div>
<div class="t" style="left:1096.28px;top:353.10px;font-size:27.16px;font-weight:400;color:#718096;letter-spacing:1.002px">Monitoring</div>
<div class="t" style="left:74.46px;top:514.25px;font-size:25.84px;font-weight:400;color:#ffffff;letter-spacing:0.674px;-webkit-text-stroke:0.93px #ffffff">SLAs</div>
<div class="t" style="left:195.36px;top:514.25px;font-size:25.84px;font-weight:400;color:#fbe3dd;letter-spacing:1.960px;-webkit-text-stroke:0.93px #fbe3dd">42.86%</div>
<div class="t" style="left:317.60px;top:474.70px;font-size:20.20px;font-weight:400;color:#718096;letter-spacing:-0.400px">TIMELINESS</div>
<div class="t" style="left:316.41px;top:507.19px;font-size:26.38px;font-weight:400;color:#ffffff;letter-spacing:0.845px;-webkit-text-stroke:0.95px #ffffff">Done by 6:30AM UTC</div>
<div class="t" style="left:318.00px;top:549.97px;font-size:23.18px;font-weight:400;color:#718096;letter-spacing:0.575px">At 06:30 AM UTC every day</div>
<div class="t" style="left:863.65px;top:512.22px;font-size:26.11px;font-weight:400;color:#fff6d5;letter-spacing:0.719px;-webkit-text-stroke:0.94px #fff6d5">87.35%</div>
<div class="t" style="left:982.10px;top:474.70px;font-size:20.20px;font-weight:400;color:#718096;letter-spacing:-0.783px">FRESHNESS</div>
<div class="t" style="left:982.11px;top:507.19px;font-size:26.38px;font-weight:400;color:#ffffff;letter-spacing:0.700px;-webkit-text-stroke:0.95px #ffffff">Daily Freshness</div>
<div class="t" style="left:981.80px;top:549.97px;font-size:23.18px;font-weight:400;color:#718096;letter-spacing:0.070px">Every 1day</div>
<div class="t" style="left:1595.40px;top:513.68px;font-size:22.46px;font-weight:400;color:#3ab4ef;letter-spacing:0.261px;-webkit-text-stroke:0.81px #3ab4ef">SLA</div>
<div class="t" style="left:105.80px;top:667.89px;font-size:23.75px;font-weight:400;color:#718096;letter-spacing:-0.608px">DAILY SUCCESS RATE</div>
<div class="t" style="left:666.20px;top:667.89px;font-size:23.75px;font-weight:400;color:#718096;letter-spacing:-0.777px">WEEKLY SUCCESS RATE</div>
<div class="t" style="left:1224.60px;top:667.89px;font-size:23.75px;font-weight:400;color:#718096;letter-spacing:-0.406px">MONTHLY SUCCESS RATE</div>
<div class="t" style="left:106.20px;top:701.57px;font-size:23.89px;font-weight:400;color:#ffffff;letter-spacing:1.112px">0%</div>
<div class="t" style="left:665.80px;top:701.57px;font-size:23.89px;font-weight:400;color:#ffffff;letter-spacing:0.602px">42.86%</div>
<div class="t" style="left:1224.60px;top:701.57px;font-size:23.89px;font-weight:400;color:#ffffff;letter-spacing:0.912px">30%</div>
<div class="t" style="left:1789.70px;top:838.17px;font-size:16.21px;font-weight:400;color:#a3a8b4;letter-spacing:0.220px">11/19/2025</div>
<div class="t" style="left:2123.30px;top:838.17px;font-size:16.21px;font-weight:400;color:#a3a8b4;letter-spacing:0.264px">11/29/2025</div>
<div class="t" style="left:2457.40px;top:838.17px;font-size:16.21px;font-weight:400;color:#a3a8b4;letter-spacing:0.097px">12/09/2025</div>
<div class="t" style="left:2820.80px;top:682.05px;font-size:16.36px;font-weight:400;color:#a3a8b4;letter-spacing:0.000px">100%</div>
<div class="t" style="left:2821.40px;top:807.75px;font-size:16.36px;font-weight:400;color:#a3a8b4;letter-spacing:0.000px">0%</div>
<div class="t" style="left:74.56px;top:974.37px;font-size:25.71px;font-weight:400;color:#ffffff;letter-spacing:1.286px;-webkit-text-stroke:0.93px #ffffff">2 Assets</div>
<div class="t" style="left:106.87px;top:1031.02px;font-size:20.56px;font-weight:400;color:#a0aec0;letter-spacing:0.356px;-webkit-text-stroke:0.74px #a0aec0">TYPE</div>
<div class="t" style="left:312.37px;top:1031.02px;font-size:20.56px;font-weight:400;color:#a0aec0;letter-spacing:1.422px;-webkit-text-stroke:0.74px #a0aec0">NAME</div>
<div class="t" style="left:1241.97px;top:1031.02px;font-size:20.56px;font-weight:400;color:#a0aec0;letter-spacing:0.735px;-webkit-text-stroke:0.74px #a0aec0">NAMESPACE</div>
<div class="t" style="left:1728.87px;top:1031.02px;font-size:20.56px;font-weight:400;color:#a0aec0;letter-spacing:0.686px;-webkit-text-stroke:0.74px #a0aec0">ASSET DURATION</div>
<div class="t" style="left:2428.87px;top:1031.02px;font-size:20.56px;font-weight:400;color:#a0aec0;letter-spacing:0.749px;-webkit-text-stroke:0.74px #a0aec0">LAST UPDATED</div>
<div class="t" style="left:1242.00px;top:1161.53px;font-size:24.18px;font-weight:400;color:#ffffff;letter-spacing:0.936px">quasarian-radiation-8124</div>
<div class="t" style="left:1242.00px;top:1375.71px;font-size:24.32px;font-weight:400;color:#ffffff;letter-spacing:0.867px">quasarian-radiation-8124</div>
<div class="t" style="left:2428.80px;top:1161.53px;font-size:24.18px;font-weight:400;color:#ffffff;letter-spacing:0.321px">Dec 18, 2025 8:34 PM UTC</div>
<div class="t" style="left:2428.80px;top:1375.51px;font-size:24.32px;font-weight:400;color:#ffffff;letter-spacing:0.280px">Dec 18, 2025 5:47 AM UTC</div>
<div class="t" style="left:2153.80px;top:1092.56px;font-size:14.93px;font-weight:400;color:#a3a8b4;letter-spacing:0.000px">2s</div>
<div class="t" style="left:2154.00px;top:1240.76px;font-size:14.93px;font-weight:400;color:#a3a8b4;letter-spacing:0.000px">0s</div>
<div class="t" style="left:2144.90px;top:1305.49px;font-size:15.36px;font-weight:400;color:#a3a8b4;letter-spacing:0.000px">10s</div>
<div class="t" style="left:2145.50px;top:1453.32px;font-size:15.22px;font-weight:400;color:#a3a8b4;letter-spacing:0.000px">0s</div>
<div class="t" style="left:71.70px;top:1533.43px;font-size:24.89px;font-weight:400;color:#ffffff;letter-spacing:-0.218px">1-2 of 2 Assets</div>
</div>
</body></html>
